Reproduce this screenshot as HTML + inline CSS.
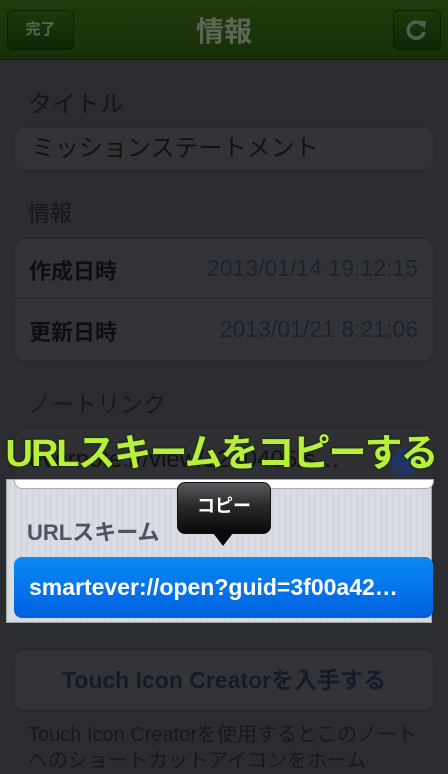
<!DOCTYPE html>
<html><head><meta charset="utf-8"><style>
*{margin:0;padding:0;box-sizing:border-box}
body{width:448px;height:767px;overflow:hidden;background:#2b2c2f;font-family:"Liberation Sans","Noto Sans CJK JP",sans-serif;position:relative}
.a{position:absolute;white-space:nowrap}
.nav{left:0;top:0;width:448px;height:60px;background:linear-gradient(#203a0b,#18300a);border-bottom:1px solid #0d1a05}
.btn{border:1px solid #0e1d05;border-radius:6px;background:linear-gradient(#1a3a0a,#0e2605)}
.h{color:#141519;font-size:23px}
.cell{background:#323336;border:1px solid #26272a;border-radius:10px}
</style></head><body>
<div class="a nav"></div>
<div class="a btn" style="left:7px;top:10px;width:67px;height:40px;color:#5a6552;font-size:15px;font-weight:bold;text-align:center;line-height:38px">完了</div>
<div class="a" style="left:0;width:448px;top:10px;text-align:center;color:#5d6656;font-size:28px;font-weight:bold">情報</div>
<div class="a btn" style="left:393px;top:10px;width:48px;height:40px"></div>
<svg class="a" style="left:404px;top:17px" width="26" height="26" viewBox="0 0 26 26"><path d="M19 9 A8 8 0 1 0 20 15" fill="none" stroke="#555b52" stroke-width="3.5"/><path d="M14 4 L22 4 L21 12 Z" fill="#555b52"/></svg>
<div class="a h" style="left:28px;top:84px;font-size:24px">タイトル</div>
<div class="a cell" style="left:14px;top:127px;width:420px;height:44px;font-size:24px;color:#111;padding:5px 0 0 16px;line-height:32px">ミッションステートメント</div>
<div class="a h" style="left:28px;top:196px;font-size:22px">情報</div>
<div class="a cell" style="left:14px;top:238px;width:420px;height:123px"></div>
<div class="a" style="left:14px;top:298px;width:420px;height:1px;background:#242528"></div>
<div class="a" style="left:29px;top:254px;font-size:22px;font-weight:bold;color:#0e0f12">作成日時</div>
<div class="a" style="right:30px;top:255px;font-size:23px;color:#1b2132">2013/01/14 19:12:15</div>
<div class="a" style="left:29px;top:315px;font-size:22px;font-weight:bold;color:#0e0f12">更新日時</div>
<div class="a" style="right:30px;top:316px;font-size:23px;color:#1b2132">2013/01/21 8:21:06</div>
<div class="a h" style="left:28px;top:385px;font-size:23px;color:#17181b">ノートリンク</div>
<div class="a cell" style="left:14px;top:428px;width:420px;height:60px;background:#2f3033;font-size:24px;color:#111;padding:17px 0 0 14px;overflow:hidden">evernote:///view/1270405/s…</div>
<div class="a" style="left:391px;top:448px;width:28px;height:28px;border-radius:50%;background:#1f3460"></div>
<div class="a" style="left:6px;top:479px;width:426px;height:144px;background:repeating-linear-gradient(90deg,#d5d8df 0 4px,#dcdfe5 4px 6px);border:1px solid #9aa"></div>
<div class="a" style="left:14px;top:479px;width:420px;height:10px;background:#fff;border-radius:0 0 8px 8px;border:1px solid #aab"></div>
<div class="a" style="left:27px;top:515px;font-size:22px;font-weight:bold;color:#4b5468">URLスキーム</div>
<div class="a" style="left:14px;top:557px;width:419px;height:61px;border-radius:8px;background:linear-gradient(#0a8af5,#0060e0);color:#fff;font-size:23px;font-weight:bold;padding:17px 0 0 15px">smartever://open?guid=3f00a42…</div>
<div class="a" style="left:177px;top:482px;width:94px;height:52px;border-radius:8px;background:linear-gradient(#5a5a5e,#2a2a2d 45%,#080809);border:1px solid #111;color:#fff;font-size:18px;font-weight:bold;text-align:center;line-height:46px">コピー</div>
<div class="a" style="left:213px;top:533px;width:0;height:0;border-left:10px solid transparent;border-right:10px solid transparent;border-top:13px solid #0a0a0b"></div>
<div class="a" style="left:0;width:442px;top:422px;text-align:center;font-size:38px;font-weight:bold;color:#b6f03a;letter-spacing:-2px;text-shadow:0 0 3px #2a3a10,0 0 2px #000">URLスキームをコピーする</div>
<div class="a cell" style="left:14px;top:649px;width:420px;height:62px;text-align:center;font-size:23px;font-weight:bold;color:#141a2a;line-height:60px">Touch Icon Creatorを入手する</div>
<div class="a" style="left:28px;top:722px;width:392px;font-size:20px;line-height:26px;color:#17181b;white-space:normal;word-break:break-all">Touch Icon Creatorを使用するとこのノートへのショートカットアイコンをホーム</div>
</body></html>
